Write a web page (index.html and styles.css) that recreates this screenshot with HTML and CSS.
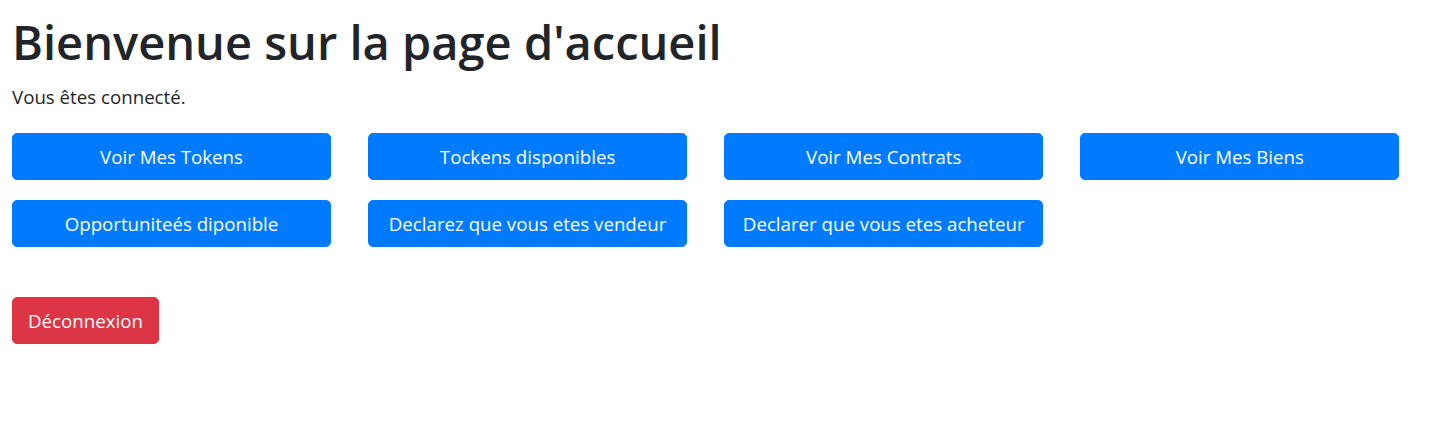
FILE: index.html
```html
<!DOCTYPE html>
<html lang="fr">
<head>
<meta charset="utf-8">
<title>Accueil</title>
<link rel="stylesheet" href="styles.css">
</head>
<body>
<main class="page">
  <h1 class="title">Bienvenue sur la page d'accueil</h1>
  <p class="lead-text">Vous êtes connecté.</p>
  <div class="actions">
    <button class="btn btn-primary">Voir Mes Tokens</button>
    <button class="btn btn-primary">Tockens disponibles</button>
    <button class="btn btn-primary">Voir Mes Contrats</button>
    <button class="btn btn-primary">Voir Mes Biens</button>
    <button class="btn btn-primary">Opportuniteés diponible</button>
    <button class="btn btn-primary">Declarez que vous etes vendeur</button>
    <button class="btn btn-primary">Declarer que vous etes acheteur</button>
  </div>
  <div class="logout">
    <button class="btn btn-danger">Déconnexion</button>
  </div>
</main>
</body>
</html>
```

FILE: styles.css
```css
* { box-sizing: border-box; }
html, body { margin: 0; padding: 0; background: #fff; }
body {
  font-family: "Open Sans", "Noto Sans", sans-serif;
  font-size: 18.7px;
  line-height: 1.5;
  color: #212529;
}
.page {
  padding: 12px 12px 0 12px;
}
.title {
  margin: 0 0 10px 0;
  font-size: 47px;
  font-weight: 600;
  line-height: 60px;
}
.lead-text {
  margin: 0 0 21px 0;
  line-height: 30px;
}
.actions {
  display: grid;
  grid-template-columns: repeat(4, 319px);
  column-gap: 37.1px;
  row-gap: 20px;
}
.btn {
  display: inline-block;
  font-family: inherit;
  font-size: 18.7px;
  line-height: 30px;
  height: 47px;
  padding: 7px 15px;
  border: 1px solid transparent;
  border-radius: 5px;
  color: #fff;
  text-align: center;
  cursor: pointer;
  white-space: nowrap;
}
.btn-primary { background: #007bff; border-color: #007bff; }
.btn-danger { background: #dc3545; border-color: #dc3545; }
.logout { margin-top: 50px; }
```
